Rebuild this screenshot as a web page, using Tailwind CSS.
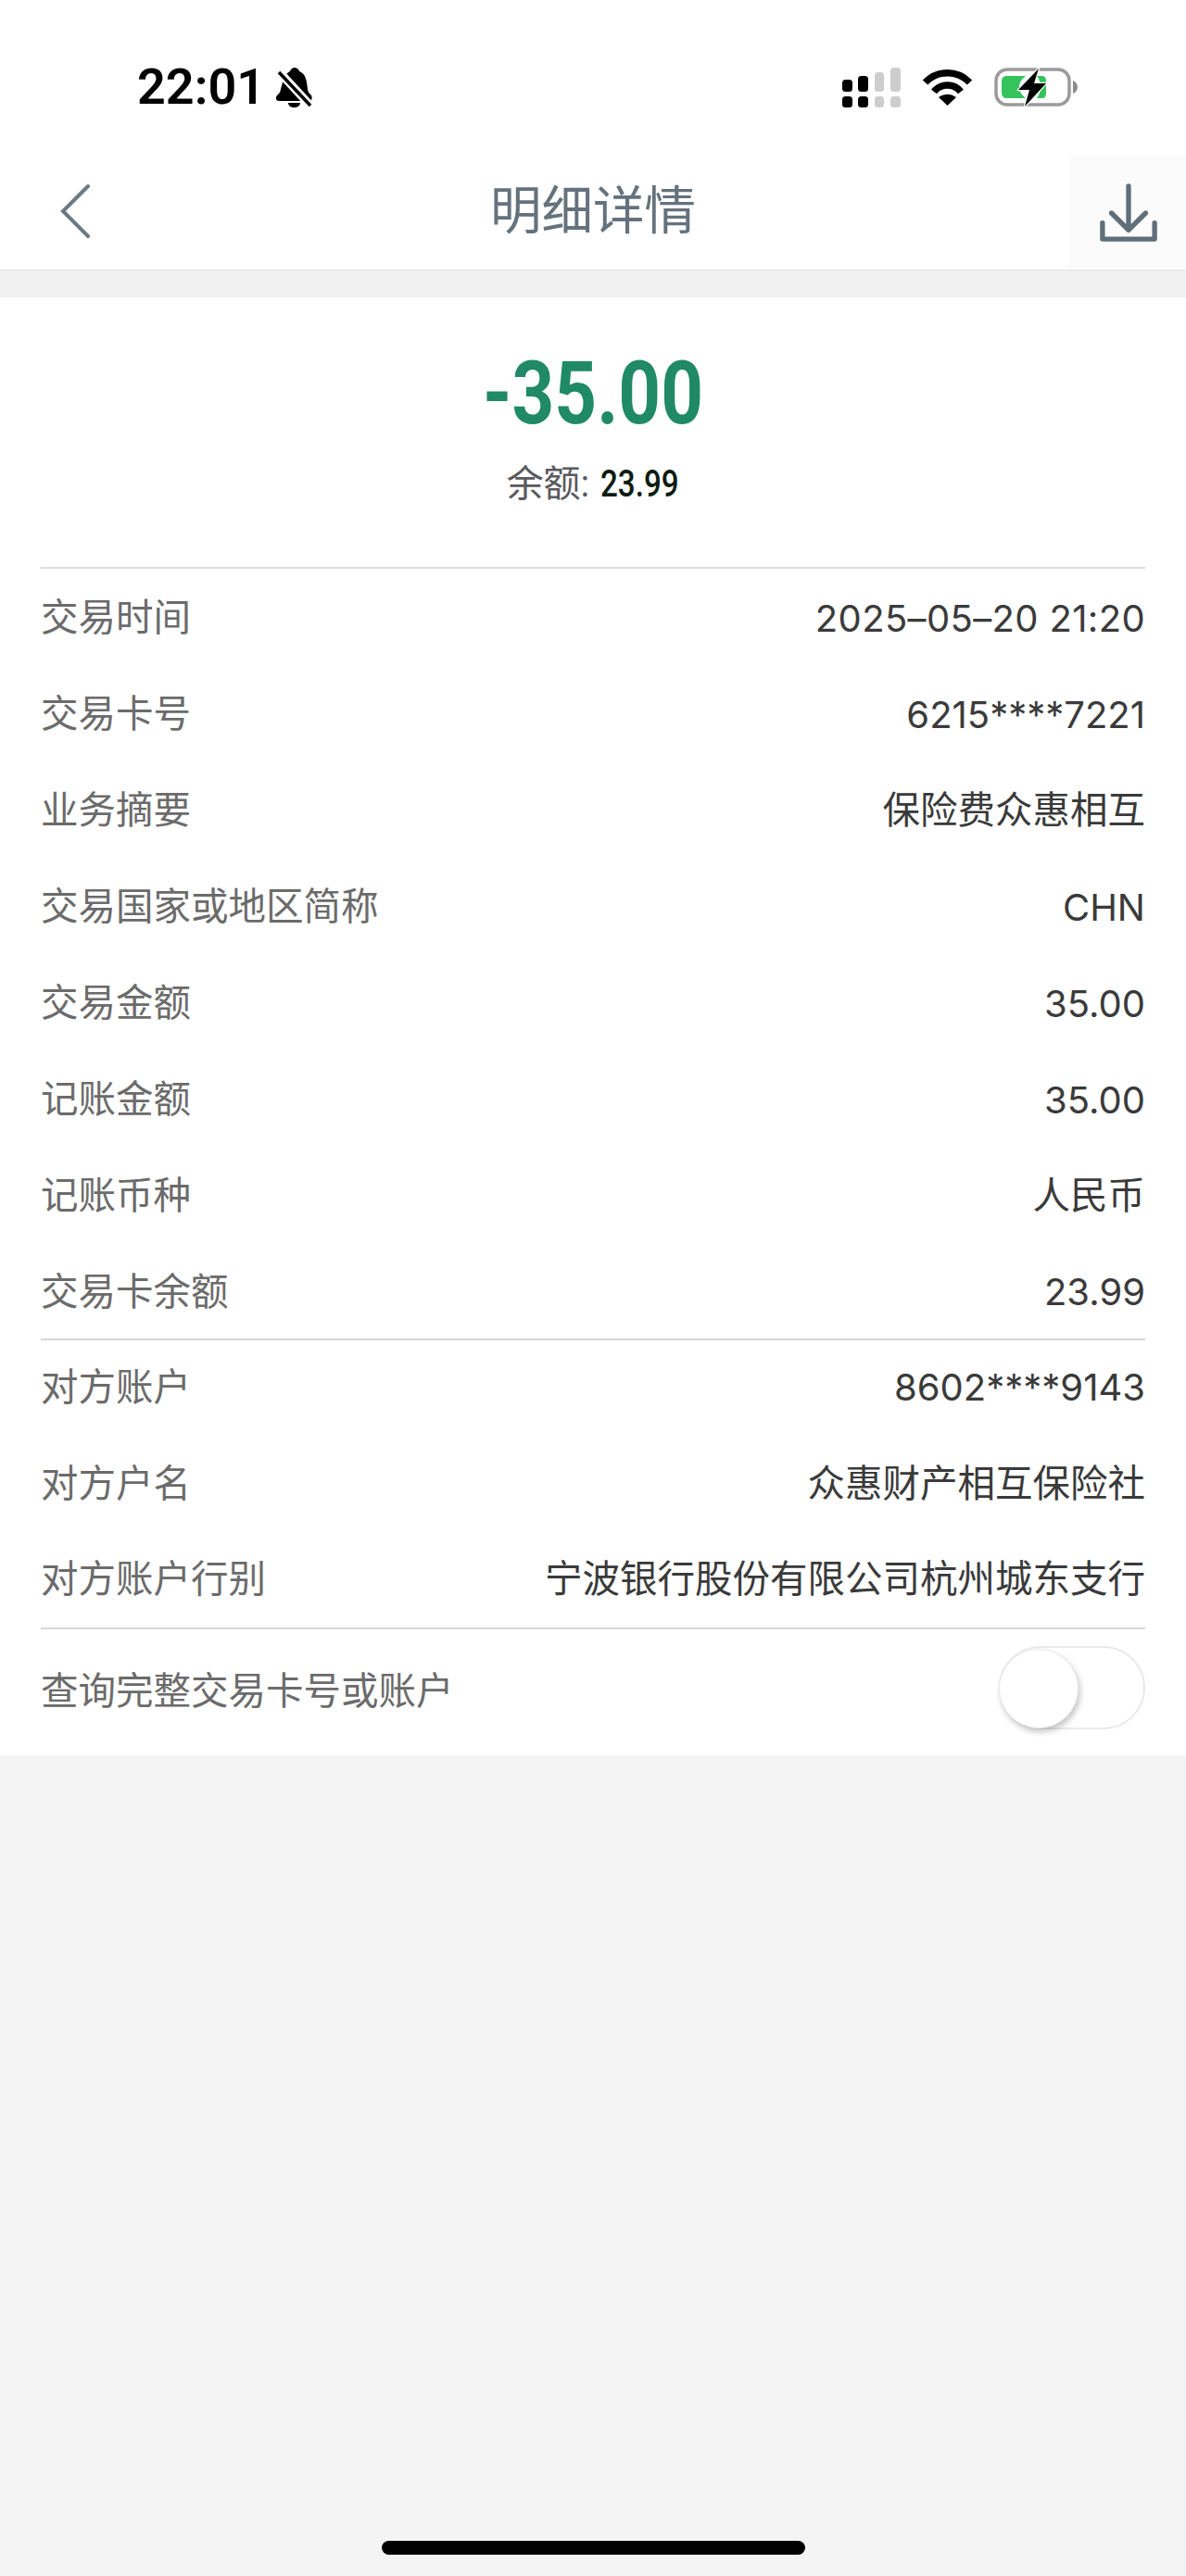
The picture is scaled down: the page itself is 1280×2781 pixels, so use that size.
<!DOCTYPE html>
<html lang="zh-CN">
<head>
<meta charset="utf-8">
<script src="https://cdn.jsdelivr.net/npm/@tailwindcss/browser@4"></script>
</head>
<body class="bg-[#f4f4f4] font-['Inter','Noto_Sans_CJK_SC',sans-serif]">
<div class="relative w-[1280px] h-[2781px] flex flex-col overflow-hidden">
  <div class="h-[164px] bg-white flex items-start justify-between pl-[148px] pr-[117px] pt-[71px]">
    <div class="flex items-center gap-[11px] h-[46px]">
      <span class="text-[54px] leading-[46px] font-semibold text-black font-['Roboto',sans-serif]">22:01</span>
      <svg class="w-[40px] h-[44px]" viewBox="0 0 40 44"><path d="M21 1c2 0 4 1 5 4 5 2 7 6 8 12l1 7c0 3 2 5 4 7 1 2 1 6-2 6H4c-3 0-4-3-2-6 2-2 4-4 4-7l2-7c1-6 4-10 8-12 1-3 3-4 5-4z" fill="#000"/><path d="M14 39h13c0 3-3 5-6.500 5S14 42 14 39z" fill="#000"/><path d="M2 3l36 39" stroke="#fff" stroke-width="9"/><path d="M4 6 38 42" stroke="#000" stroke-width="3.500"/></svg>
    </div>
    <div class="flex items-center h-[46px] gap-[23px]">
      <svg class="w-[63px] h-[43px]" viewBox="0 0 63 43"><rect x="0" y="13" width="11" height="13" rx="3.500" fill="#000"/><rect x="17" y="9" width="11" height="17" rx="3.500" fill="#000"/><rect x="35" y="5" width="10" height="21" rx="3.500" fill="#cdcdcd"/><rect x="52" y="0" width="11" height="26" rx="3.500" fill="#cdcdcd"/><rect x="0" y="31" width="11" height="12" rx="3.500" fill="#000"/><rect x="17" y="31" width="11" height="12" rx="3.500" fill="#000"/><rect x="35" y="31" width="10" height="12" rx="3.500" fill="#cdcdcd"/><rect x="52" y="31" width="11" height="12" rx="3.500" fill="#cdcdcd"/></svg>
      <svg class="w-[55px] h-[40px]" viewBox="0 0 55 40"><path d="M3.500 15A33 33 0 0 1 51.500 15" fill="none" stroke="#000" stroke-width="7.500"/><path d="M13 25A18.500 18.500 0 0 1 42 25" fill="none" stroke="#000" stroke-width="7.500"/><path d="M18 31Q27.500 24.500 37 31L27.500 40z" fill="#000"/></svg>
      <svg class="w-[90px] h-[42px]" viewBox="0 0 90 42"><rect x="2" y="2" width="79" height="38" rx="12" fill="#fff" stroke="#9b9b9b" stroke-width="3.500"/><path d="M85 14c3 1 5 4 5 7s-2 6-5 7z" fill="#8c8c8c"/><path d="M14 9H34C29 13 27 17 27 21s2 8 7 12H14c-4 0-6-2-6-6V15c0-4 2-6 6-6z" fill="#34c35c"/><path d="M46 9h5c4 0 5 2 5 6v12c0 4-1 6-5 6h-5c3-4 4-8 4-12s-1-8-4-12z" fill="#34c35c"/><path d="M48 1 26 24H38L33 42 56 17H43z" fill="#000" stroke="#fff" stroke-width="2.500" stroke-linejoin="round" paint-order="stroke"/></svg>
    </div>
  </div>
  <div class="h-[127px] bg-white relative flex items-center justify-center">
    <span class="text-[55.500px] leading-none text-[#64727d] mt-[-1px]">明细详情</span>
    <svg class="absolute left-[62px] top-[34px] w-[38px] h-[60px]" viewBox="0 0 38 60" fill="none" stroke="#6b7a85" stroke-width="4" stroke-linecap="round"><path d="M33 3 6 30l27 27"/></svg>
    <div class="absolute right-0 top-[3px] w-[126px] h-[124px] bg-[#fbfbfb] flex items-center justify-center">
      <svg class="w-[64px] h-[64px] mt-[2px] ml-[2px]" viewBox="0 0 66 66" fill="none" stroke="#5f6f7b" stroke-width="5.500" stroke-linecap="round" stroke-linejoin="round"><path d="M33 3v47M14 33l19 19 19-19M4 44v18h58V44"/></svg>
    </div>
  </div>
  <div class="h-[30px] bg-[#f1f1f1] border-t border-[#e3e3e3]"></div>
  <main class="bg-white h-[1574px] px-[44px] flex flex-col text-[40.500px]">
    <div class="h-[293px] flex flex-col items-center border-b-2 border-[#dedede] font-['Roboto','Noto_Sans_CJK_SC',sans-serif]">
      <div class="mt-[59px] text-[94px] leading-[90px] font-bold text-[#1f8a65] scale-x-[0.85]">-35.00</div>
      <div class="mt-[30px] flex items-baseline text-[40px] leading-[46px] text-[#5a5a60]">余额:<span class="ml-[12px] mr-[-17px] font-medium text-[#0c1c10] inline-block origin-left scale-x-[0.83]">23.99</span></div>
    </div>
    <div class="flex flex-col">
      <div class="h-[104px] pt-[3px] flex items-center justify-between"><span class="text-[#6b6b6b]">交易时间</span><span class="text-[#3a3a3a] text-[40px] tracking-[0.350px]">2025–05–20 21:20</span></div>
      <div class="h-[104px] pt-[3px] flex items-center justify-between"><span class="text-[#6b6b6b]">交易卡号</span><span class="text-[#3a3a3a] text-[40px]">6215****7221</span></div>
      <div class="h-[104px] pt-[3px] flex items-center justify-between"><span class="text-[#6b6b6b]">业务摘要</span><span class="text-[#3a3a3a]">保险费众惠相互</span></div>
      <div class="h-[104px] pt-[3px] flex items-center justify-between"><span class="text-[#6b6b6b]">交易国家或地区简称</span><span class="text-[#3a3a3a] text-[40px]">CHN</span></div>
      <div class="h-[104px] pt-[3px] flex items-center justify-between"><span class="text-[#6b6b6b]">交易金额</span><span class="text-[#3a3a3a] text-[40px]">35.00</span></div>
      <div class="h-[104px] pt-[3px] flex items-center justify-between"><span class="text-[#6b6b6b]">记账金额</span><span class="text-[#3a3a3a] text-[40px]">35.00</span></div>
      <div class="h-[104px] pt-[3px] flex items-center justify-between"><span class="text-[#6b6b6b]">记账币种</span><span class="text-[#3a3a3a]">人民币</span></div>
      <div class="h-[105px] pt-[3px] flex items-center justify-between border-b-2 border-[#d8d8d8]"><span class="text-[#6b6b6b]">交易卡余额</span><span class="text-[#3a3a3a] text-[40px]">23.99</span></div>
      <div class="h-[104px] pb-[2px] flex items-center justify-between"><span class="text-[#6b6b6b]">对方账户</span><span class="text-[#3a3a3a] text-[40px]">8602****9143</span></div>
      <div class="h-[104px] pb-[2px] flex items-center justify-between"><span class="text-[#6b6b6b]">对方户名</span><span class="text-[#3a3a3a]">众惠财产相互保险社</span></div>
      <div class="h-[104px] pb-[2px] flex items-center justify-between border-b-2 border-[#d8d8d8]"><span class="text-[#6b6b6b]">对方账户行别</span><span class="text-[#3a3a3a]">宁波银行股份有限公司杭州城东支行</span></div>
      <div class="h-[135px] flex items-center justify-between"><span class="text-[#6b6b6b]">查询完整交易卡号或账户</span>
        <div class="relative w-[158px] h-[90px] mt-[-10px]">
          <div class="absolute inset-0 rounded-full border-2 border-[#eaeaea]"></div>
          <div class="absolute left-0 top-[3px] w-[86px] h-[86px] rounded-full bg-white border border-[#ededed] shadow-[2px_4px_6px_rgba(0,0,0,0.22)]"></div>
        </div>
      </div>
    </div>
  </main>
  <div class="absolute left-[412px] top-[2743px] w-[457px] h-[15px] rounded-full bg-black"></div>
</div>
</body>
</html>
